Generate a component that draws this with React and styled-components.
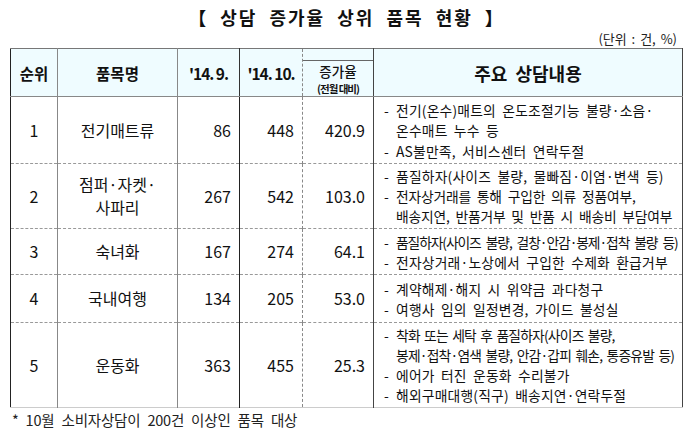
import React from 'react';
import styled, { createGlobalStyle } from 'styled-components';

const GlobalStyle = createGlobalStyle`
  body {
    margin: 0;
    background: #ffffff;
    font-family: 'Noto Sans CJK KR', 'Noto Sans', sans-serif;
    color: #111;
  }
`;

const Page = styled.div`
  width: 697px;
  height: 437px;
  padding: 4px 14px 0 10px;
  box-sizing: border-box;
`;

const Title = styled.h1`
  margin: 0;
  height: 24px;
  text-align: center;
  font-size: 18px;
  font-weight: 700;
  line-height: 26px;
  letter-spacing: 2px;
  word-spacing: 6px;
`;

const Unit = styled.div`
  height: 20px;
  text-align: right;
  padding-right: 6px;
  font-size: 13px;
  line-height: 22px;
  word-spacing: 2px;
  color: #222;
`;

const Table = styled.table`
  width: 673px;
  border-collapse: collapse;
  table-layout: fixed;
  border-top: 1px solid #777;
  border-left: 1px solid #222;
  border-right: 1px solid #444;
  border-bottom: 1px solid #ccc;
`;

const HeadCell = styled.th`
  height: 47px;
  padding: 0;
  background: #effcff;
  border-bottom: 1px solid #888;
  border-right: ${p => p.$edge || '1px solid #888'};
  font-size: ${p => p.$big ? '18px' : '15.5px'};
  font-weight: 700;
  letter-spacing: ${p => p.$tight ? '-1px' : '0'};
  word-spacing: ${p => p.$big ? '4px' : '0'};
  vertical-align: middle;
`;

const RateBox = styled.div`
  margin: 11px 0 0;
  height: 35px;
  border-top: 1px solid #666;
  display: flex;
  flex-direction: column;
  align-items: center;
  justify-content: center;
  span {
    font-size: 13.5px;
    line-height: 20px;
    font-weight: 500;
  }
  small {
    font-size: 10.5px;
    line-height: 15px;
    letter-spacing: -1px;
  }
`;

const Row = styled.tr`
  height: ${p => p.$h}px;
  border-bottom: ${p => p.$last ? 'none' : '1px dashed #999'};
`;

const Cell = styled.td`
  padding: ${p => p.$num ? '0 8px 0 0' : '0'};
  text-align: ${p => p.$num ? 'right' : 'center'};
  font-size: 16px;
  line-height: 23px;
  border-right: ${p => p.$edge || '1px solid #888'};
  vertical-align: middle;
`;

const Content = styled.td`
  padding: 1px 2px 1px 8px;
  vertical-align: middle;
`;

const Item = styled.div`
  position: relative;
  padding-left: 14px;
  font-size: 13.8px;
  line-height: 20px;
  letter-spacing: ${p => p.$ls || '0.2px'};
  word-spacing: ${p => p.$ws || '3px'};
  white-space: nowrap;
  margin: ${p => p.$gap ? '1px 0' : '0'};
  &::before {
    content: '-';
    position: absolute;
    left: 2px;
    top: 0;
  }
`;

const Note = styled.div`
  padding: 0 0 0 2px;
  font-size: 14.5px;
  line-height: 24px;
  letter-spacing: -0.2px;
  word-spacing: 4px;
  color: #222;
`;

const rows = [
  {
    rank: 1, name: ['전기매트류'], sep: 86, oct: 448, rate: '420.9', h: 67,
    items: [
      { lines: ['전기(온수)매트의 온도조절기능 불량·소음·', '온수매트 누수 등'] },
      { lines: ['AS불만족, 서비스센터 연락두절'] },
    ],
  },
  {
    rank: 2, name: ['점퍼·자켓·', '사파리'], sep: 267, oct: 542, rate: '103.0', h: 65,
    items: [
      { lines: ['품질하자(사이즈 불량, 물빠짐·이염·변색 등)'] },
      { lines: ['전자상거래를 통해 구입한 의류 정품여부,', '배송지연, 반품거부 및 반품 시 배송비 부담여부'], ls: '-0.2px' },
    ],
  },
  {
    rank: 3, name: ['숙녀화'], sep: 167, oct: 274, rate: '64.1', h: 46,
    items: [
      { lines: ['품질하자(사이즈 불량, 걸창·안감·봉제·접착 불량 등)'], ls: '-1.1px', ws: '3px' },
      { lines: ['전자상거래·노상에서 구입한 수제화 환급거부'] },
    ],
  },
  {
    rank: 4, name: ['국내여행'], sep: 134, oct: 205, rate: '53.0', h: 48,
    items: [
      { lines: ['계약해제·해지 시 위약금 과다청구'] },
      { lines: ['여행사 임의 일정변경, 가이드 불성실'] },
    ],
  },
  {
    rank: 5, name: ['운동화'], sep: 363, oct: 455, rate: '25.3', h: 85, last: true,
    items: [
      { lines: ['착화 또는 세탁 후 품질하자(사이즈 불량,', '봉제·접착·염색 불량, 안감·갑피 훼손, 통증유발 등)'], ls: '-0.8px', ws: '2px' },
      { lines: ['에어가 터진 운동화 수리불가'] },
      { lines: ['해외구매대행(직구) 배송지연·연락두절'] },
    ],
  },
];

export default function App() {
  return (
    <Page>
      <GlobalStyle />
      <Title>【 상담 증가율 상위 품목 현황 】</Title>
      <Unit>(단위 : 건, %)</Unit>
      <Table>
        <colgroup>
          <col style={{ width: 47 }} />
          <col style={{ width: 120 }} />
          <col style={{ width: 62 }} />
          <col style={{ width: 63 }} />
          <col style={{ width: 71 }} />
          <col />
        </colgroup>
        <thead>
          <tr>
            <HeadCell>순위</HeadCell>
            <HeadCell>품목명</HeadCell>
            <HeadCell $tight $edge="1px solid #333">'14. 9.</HeadCell>
            <HeadCell $tight $edge="1px dashed #888">'14. 10.</HeadCell>
            <HeadCell $edge="1px solid #444">
              <RateBox>
                <span>증가율</span>
                <small>(전월 대비)</small>
              </RateBox>
            </HeadCell>
            <HeadCell $big $edge="none">주요 상담내용</HeadCell>
          </tr>
        </thead>
        <tbody>
          {rows.map(r => (
            <Row key={r.rank} $h={r.h} $last={r.last}>
              <Cell>{r.rank}</Cell>
              <Cell>
                {r.name.map(n => <div key={n}>{n}</div>)}
              </Cell>
              <Cell $num $edge="1px solid #222">{r.sep}</Cell>
              <Cell $num $edge="1px dashed #888">{r.oct}</Cell>
              <Cell $num $edge="1px solid #444">{r.rate}</Cell>
              <Content>
                {r.items.map((it, i) => (
                  <Item key={i} $ls={it.ls} $ws={it.ws} $gap={r.rank === 1}>
                    {it.lines.map(l => <div key={l}>{l}</div>)}
                  </Item>
                ))}
              </Content>
            </Row>
          ))}
        </tbody>
      </Table>
      <Note>* 10월 소비자상담이 200건 이상인 품목 대상</Note>
    </Page>
  );
}
